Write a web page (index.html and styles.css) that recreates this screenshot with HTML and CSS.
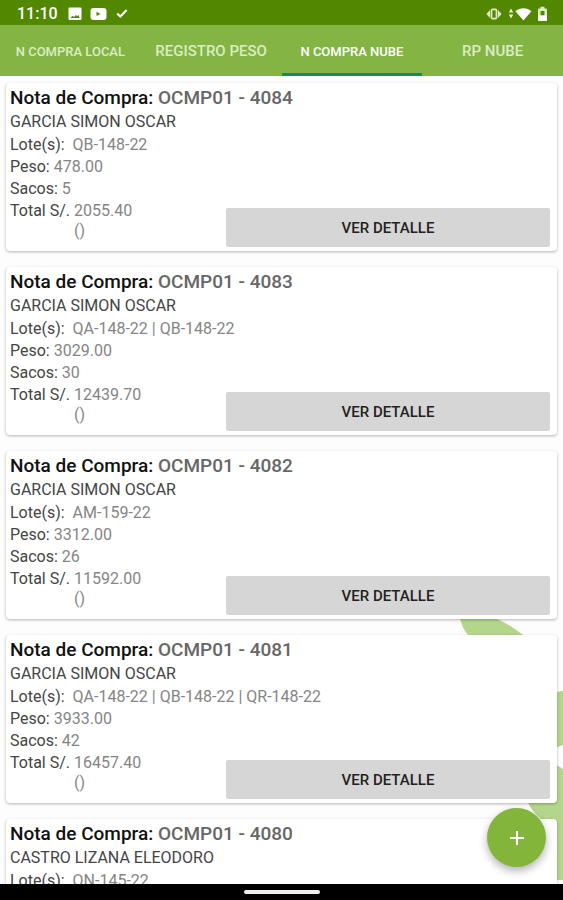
FILE: index.html
```html
<!DOCTYPE html>
<html lang="es">
<head>
    <meta charset="UTF-8">
    <meta name="viewport" content="width=device-width, initial-scale=1.0">
    <title>Notas de Compra</title>
    <link rel="stylesheet" href="styles.css">
</head>
<body>
    <header class="status-bar">
        <span class="clock">11:10</span>
        <svg class="icon-image" width="14" height="14" viewBox="0 0 14 14">
            <rect x="0.5" y="0.5" width="13" height="12.5" rx="1" fill="#fff"/>
            <path d="M2.500 11 4.500 8.800l1.500 1.200L8 8l1.200 1.200L10.500 8l1 3z" fill="#528700"/>
        </svg>
        <svg class="icon-video" width="17" height="14" viewBox="0 0 17 14">
            <rect x="0.5" y="1" width="16" height="12" rx="3" fill="#fff"/>
            <path d="M6.5 4.8v4.200L10.500 6.9z" fill="#528700"/>
        </svg>
        <svg class="icon-check" width="12" height="12" viewBox="0 0 12 12">
            <path d="M1.2 5.500 4.400 8.500 10.600 2" fill="none" stroke="#fff" stroke-width="2.2"/>
        </svg>
        <div class="status-right">
            <svg width="16" height="12" viewBox="0 0 16 12">
                <rect x="5.500" y="1.400" width="5" height="9.200" rx="1" fill="none" stroke="#dcebc6" stroke-width="1.800"/>
                <path d="M4 2v8L.4 6zM12 2v8l3.600-4z" fill="#dcebc6"/>
            </svg>
            <svg class="icon-wifi" width="24" height="14" viewBox="0 0 24 14">
                <path d="M3 1.4 5.200 5.400H.8zM3 11.400.8 7.400h4.400z" fill="#eef5e2"/>
                <path d="M7.400 4.200C11.600.2 19.200.2 23.400 4.200L15.400 13.400z" fill="#fff"/>
            </svg>
            <svg width="11" height="16" viewBox="0 0 11 16">
                <path d="M3.500 2.500V.8h4v1.700h1.500q1 0 1 1V14q0 1-1 1H2q-1 0-1-1V3.500q0-1 1-1z" fill="#dcebc6"/>
                <path d="M3.600 5h3.800v4.500H3.600z" fill="#528700"/>
                <path d="M1 9.500h9V14q0 1-1 1H2q-1 0-1-1z" fill="#fff"/>
            </svg>
        </div>
    </header>

    <nav class="tabs">
        <a class="tab tab-small" href="#local">N COMPRA LOCAL</a>
        <a class="tab" href="#registro">REGISTRO PESO</a>
        <a class="tab tab-small active" href="#nube">N COMPRA NUBE</a>
        <a class="tab" href="#rp">RP NUBE</a>
    </nav>

    <main class="content">
        <!-- Leaves behind the list -->
        <svg class="leaves" width="120" height="270" viewBox="0 0 120 270">
            <path d="M16 0Q50 -4 80 21L25 21Q19 15 16 0z"/>
            <path d="M120 77Q114 77 112 80V134L120 131z"/>
            <path d="M120 155 112 150V187L84 187Q90 199 98 205L112 212V266H120z"/>
        </svg>

        <div class="note-list">
            <article class="card">
                <h2>Nota de Compra: <span>OCMP01 - 4084</span></h2>
                <p class="supplier">GARCIA SIMON OSCAR</p>
                <p>Lote(s):&nbsp; <span>QB-148-22</span></p>
                <p>Peso: <span>478.00</span></p>
                <p>Sacos: <span>5</span></p>
                <div class="card-footer">
                    <p class="total">Total S/. <span>2055.40<br>()</span></p>
                    <button type="button">VER DETALLE</button>
                </div>
            </article>

            <article class="card">
                <h2>Nota de Compra: <span>OCMP01 - 4083</span></h2>
                <p class="supplier">GARCIA SIMON OSCAR</p>
                <p>Lote(s):&nbsp; <span>QA-148-22 | QB-148-22</span></p>
                <p>Peso: <span>3029.00</span></p>
                <p>Sacos: <span>30</span></p>
                <div class="card-footer">
                    <p class="total">Total S/. <span>12439.70<br>()</span></p>
                    <button type="button">VER DETALLE</button>
                </div>
            </article>

            <article class="card">
                <h2>Nota de Compra: <span>OCMP01 - 4082</span></h2>
                <p class="supplier">GARCIA SIMON OSCAR</p>
                <p>Lote(s):&nbsp; <span>AM-159-22</span></p>
                <p>Peso: <span>3312.00</span></p>
                <p>Sacos: <span>26</span></p>
                <div class="card-footer">
                    <p class="total">Total S/. <span>11592.00<br>()</span></p>
                    <button type="button">VER DETALLE</button>
                </div>
            </article>

            <article class="card">
                <h2>Nota de Compra: <span>OCMP01 - 4081</span></h2>
                <p class="supplier">GARCIA SIMON OSCAR</p>
                <p>Lote(s):&nbsp; <span>QA-148-22 | QB-148-22 | QR-148-22</span></p>
                <p>Peso: <span>3933.00</span></p>
                <p>Sacos: <span>42</span></p>
                <div class="card-footer">
                    <p class="total">Total S/. <span>16457.40<br>()</span></p>
                    <button type="button">VER DETALLE</button>
                </div>
            </article>

            <article class="card">
                <h2>Nota de Compra: <span>OCMP01 - 4080</span></h2>
                <p class="supplier">CASTRO LIZANA ELEODORO</p>
                <p>Lote(s):&nbsp; <span>QN-145-22</span></p>
            </article>
        </div>

        <button type="button" class="fab" aria-label="Agregar">
            <svg width="16" height="16" viewBox="0 0 16 16">
                <path d="M8 1v14M1 8h14" stroke="#fff" stroke-width="2"/>
            </svg>
        </button>
    </main>

    <footer class="nav-bar"><div class="home-pill"></div></footer>
</body>
</html>
```

FILE: styles.css
```css
* {
    box-sizing: border-box;
}

body {
    margin: 0;
    height: 100vh;
    display: flex;
    flex-direction: column;
    overflow: hidden;
    font-family: Roboto, sans-serif;
    background: #fdfdfd;
}

.status-bar {
    display: flex;
    align-items: center;
    height: 25px;
    padding: 2px 15px 0 17px;
    background: #528700;
    color: #fff;
}
.clock {
    font-size: 16px;
    font-weight: 500;
}
.icon-image {
    margin-left: 10px;
}
.icon-video {
    margin-left: 8px;
}
.icon-check {
    margin-left: 9px;
}
.status-right {
    display: flex;
    align-items: center;
    margin-left: auto;
}
.icon-wifi {
    margin: 0 5px 0 6px;
}

.tabs {
    display: flex;
    height: 51px;
    background: #84b444;
}
.tab {
    flex: 1;
    display: flex;
    align-items: center;
    justify-content: center;
    padding-top: 4px;
    border-bottom: 3px solid transparent;
    color: #dcecc4;
    font-size: 15px;
    font-weight: 500;
    text-decoration: none;
    white-space: nowrap;
}
.tab-small {
    font-size: 13px;
}
.tab.active {
    color: #fff;
    border-bottom-color: #1a8a5c;
}

.content {
    position: relative;
    flex: 1;
    min-height: 0;
    overflow: hidden;
}
.leaves {
    position: absolute;
    right: 0;
    bottom: 0;
    fill: #b3d68b;
}

.note-list {
    position: relative;
    display: flex;
    flex-direction: column;
    gap: 16px;
    padding: 7px 6px;
}
.card {
    flex: none;
    min-height: 168px;
    padding: 3px 7px 4px 4px;
    border-radius: 4px;
    background: #fff;
    box-shadow: 0 1px 3px rgba(0, 0, 0, 0.3);
    color: #444;
}
.card h2 {
    margin: 0;
    font-size: 19px;
    line-height: 24px;
    font-weight: 500;
    color: #111;
}
.card h2 span {
    color: #666;
}
.card p {
    margin: 0;
    font-size: 16px;
    line-height: 22px;
}
.card .supplier {
    line-height: 24px;
}
.card p span {
    color: #858585;
}
.card-footer {
    display: grid;
    grid-template-columns: 2fr 3fr;
    align-items: end;
    min-height: 47px;
}
.card .total {
    display: flex;
    gap: 4px;
    align-items: baseline;
    align-self: start;
}
.total span {
    line-height: 20px;
}
.card-footer button {
    height: 39px;
    border: 0;
    border-radius: 2px;
    background: #d6d6d6;
    color: #222;
    font-family: inherit;
    font-size: 15px;
    font-weight: 500;
}

.fab {
    position: absolute;
    right: 17px;
    bottom: 17px;
    display: flex;
    align-items: center;
    justify-content: center;
    width: 59px;
    height: 59px;
    padding: 0;
    border: 0;
    border-radius: 50%;
    background: #82b53a;
    box-shadow: 0 4px 8px rgba(0, 0, 0, 0.3);
}

.nav-bar {
    display: flex;
    justify-content: center;
    height: 16px;
    padding-top: 6px;
    background: #000;
}
.home-pill {
    width: 76px;
    height: 4px;
    border-radius: 2px;
    background: #eee;
}
```
